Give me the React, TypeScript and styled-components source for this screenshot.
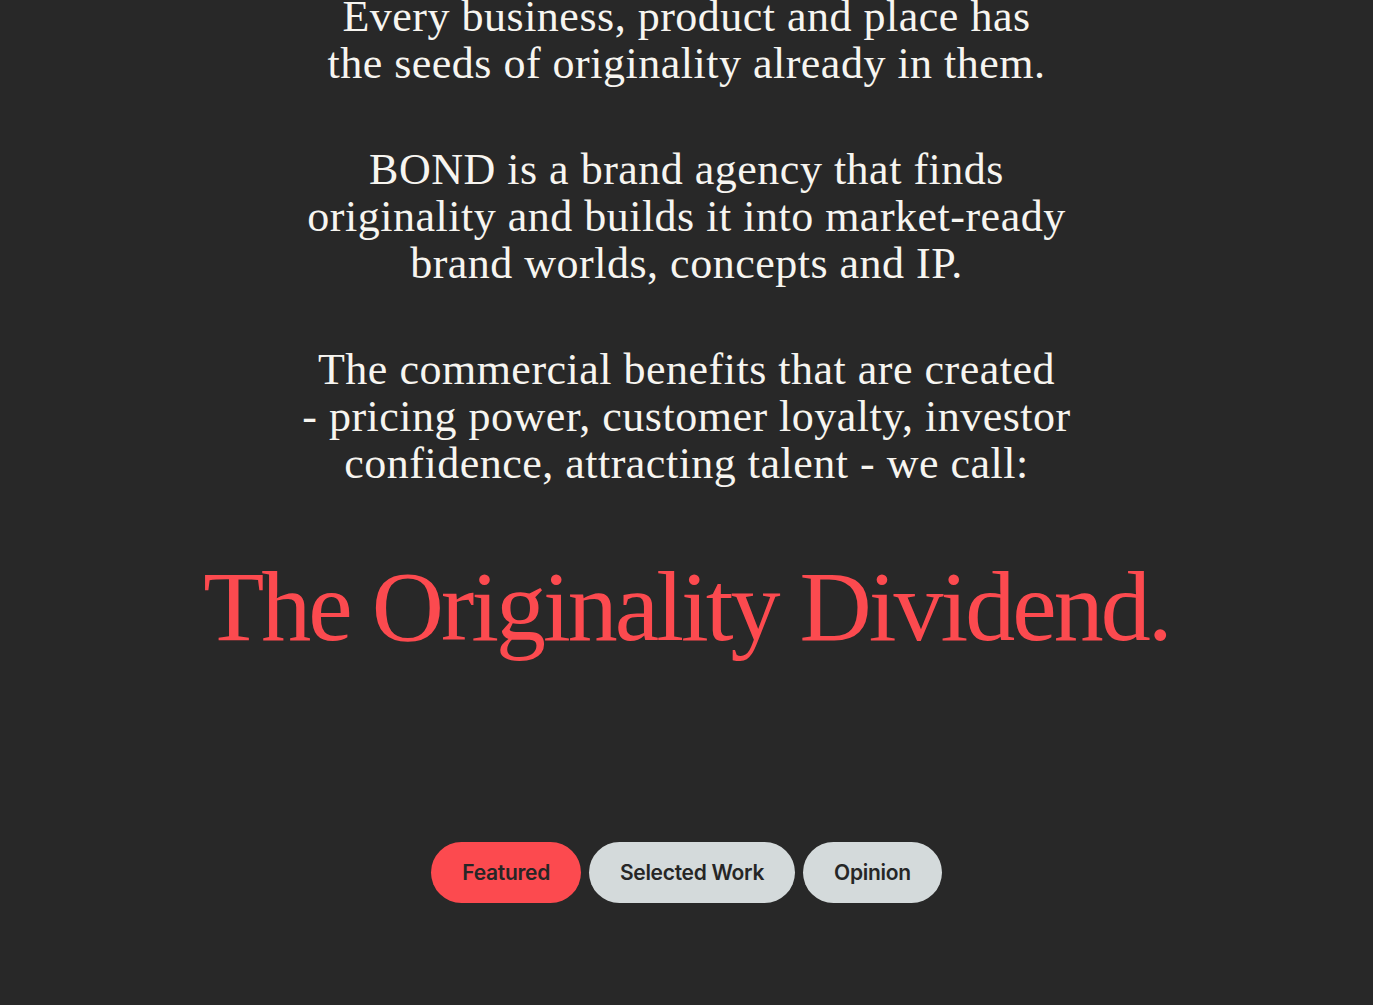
import React, { useState } from "react";
import styled, { createGlobalStyle } from "styled-components";

const GlobalStyle = createGlobalStyle`
  html, body {
    margin: 0;
    padding: 0;
    background: #282828;
  }
  body {
    overflow: hidden;
  }
`;

const Page = styled.main`
  min-height: 1005px;
  background: #282828;
  display: flex;
  flex-direction: column;
  align-items: center;
  margin-top: -7px;
`;

const Statement = styled.section`
  display: flex;
  flex-direction: column;
  align-items: center;
  gap: 59px;
`;

const Paragraph = styled.p`
  margin: 0;
  font-family: "Liberation Serif", "DejaVu Serif", serif;
  font-size: 44px;
  line-height: 47px;
  letter-spacing: 0.5px;
  color: #f7f5f0;
  text-align: center;
`;

const Headline = styled.h1`
  margin: 65px 0 0;
  font-family: "Liberation Serif", "DejaVu Serif", serif;
  font-weight: 400;
  font-size: 100px;
  line-height: 110px;
  letter-spacing: -3px;
  color: #fc4a4f;
  text-align: center;
`;

const Tabs = styled.nav`
  display: flex;
  gap: 8px;
  margin-top: 180px;
`;

const Tab = styled.button<{ $active?: boolean }>`
  height: 61px;
  padding: 0 31px;
  border: none;
  border-radius: 31px;
  background: ${(p) => (p.$active ? "#fc4a4f" : "#d4dadb")};
  color: #262626;
  font-family: Inter, "Liberation Sans", sans-serif;
  font-weight: 600;
  font-size: 21px;
  letter-spacing: -0.3px;
  cursor: pointer;
`;

const tabs = ["Featured", "Selected Work", "Opinion"];

const App: React.FC = () => {
  const [active, setActive] = useState("Featured");

  return (
    <>
      <GlobalStyle />
      <Page>
        <Statement>
          <Paragraph>
            Every business, product and place has
            <br />
            the seeds of originality already in them.
          </Paragraph>
          <Paragraph>
            BOND is a brand agency that finds
            <br />
            originality and builds it into market-ready
            <br />
            brand worlds, concepts and IP.
          </Paragraph>
          <Paragraph>
            The commercial benefits that are created
            <br />- pricing power, customer loyalty, investor
            <br />
            confidence, attracting talent - we call:
          </Paragraph>
        </Statement>
        <Headline>The Originality Dividend.</Headline>
        <Tabs>
          {tabs.map((t) => (
            <Tab key={t} $active={active === t} onClick={() => setActive(t)}>
              {t}
            </Tab>
          ))}
        </Tabs>
      </Page>
    </>
  );
};

export default App;
